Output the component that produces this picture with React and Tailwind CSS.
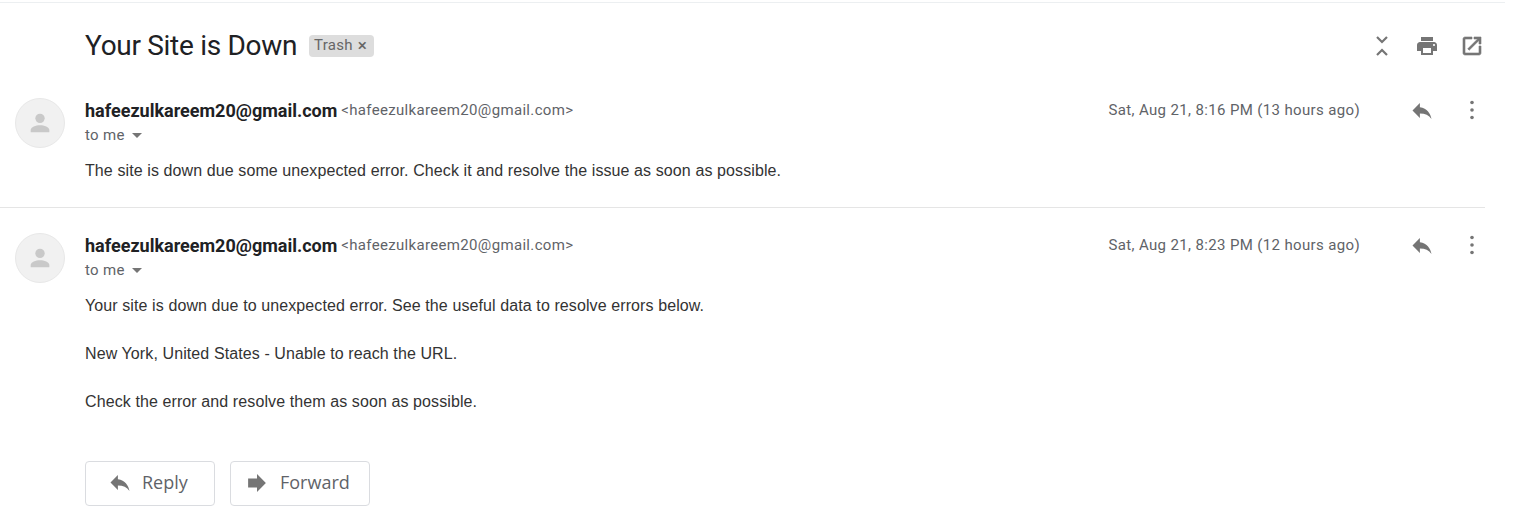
const ReplyIcon = ({ className }) => (
  <svg viewBox="2 3 20 18" className={className} fill="currentColor">
    <path d="M10 9V5l-7 7 7 7v-4.1c5 0 8.500 1.600 11 5.100-1-5-4-10-11-11z" />
  </svg>
);

const DotsIcon = () => (
  <svg viewBox="0 0 24 24" className="h-6 w-6 text-[#757575]" fill="currentColor">
    <circle cx="12" cy="4.500" r="1.800" />
    <circle cx="12" cy="12" r="1.800" />
    <circle cx="12" cy="19.500" r="1.800" />
  </svg>
);

function Message({ time, children }) {
  return (
    <div className="flex">
      <div className="mt-[-1px] ml-[15px] flex h-[50px] w-[50px] shrink-0 items-center justify-center rounded-full border border-[#e8e8e8] bg-[#f1f1f1]">
        <svg viewBox="0 0 24 24" className="h-7 w-7 text-[#c9c9c9]" fill="currentColor">
          <circle cx="12" cy="8" r="4" />
          <path d="M12 14c-3.600 0-8 1.600-8 4v2h16v-2c0-2.400-4.400-4-8-4z" />
        </svg>
      </div>
      <div className="ml-5 min-w-0 flex-1">
        <div className="mt-[-1px] flex h-6 items-center">
          <span className="text-[18px] font-bold text-[#202124]">hafeezulkareem20@gmail.com</span>
          <span className="ml-1 text-[15px] tracking-[0.33px] text-[#5f6368]">&lt;hafeezulkareem20@gmail.com&gt;</span>
          <span className="ml-auto text-[15px] tracking-[0.36px] text-[#5f6368]">{time}</span>
          <span className="mr-[1px] ml-[51px] flex w-[73px] items-center justify-between">
            <ReplyIcon className="h-[19px] w-[22px] text-[#757575]" />
            <DotsIcon />
          </span>
        </div>
        <div className="mt-[4px] flex h-[18px] items-center text-[15px] tracking-[0.3px] text-[#5f6368]">
          to me
          <span className="mt-[1px] ml-[7px] h-0 w-0 border-x-[5px] border-t-[5px] border-x-transparent border-t-[#757575]" />
        </div>
        <div className="mt-[18px] font-['Liberation_Sans',sans-serif] text-[16px] leading-[18px] tracking-[0.1px] text-[#333333]">{children}</div>
      </div>
    </div>
  );
}

function ActionButton({ label, icon, className }) {
  return (
    <button className={`flex h-[45px] items-center rounded border border-[#dadce0] bg-white pb-[2px] font-['Open_Sans',sans-serif] text-[18px] font-medium text-[#5f6368] ${className}`}>
      {icon}
      {label}
    </button>
  );
}

export default function App() {
  return (
    <div className="h-[522px] w-[1525px] overflow-hidden bg-white font-['Roboto',sans-serif]">
      <div className="mt-[2px] h-px w-[1505px] bg-[#eceff1]" />

      <div className="flex h-[85px] w-[1485px] items-center pl-[85px]">
        <h1 className="w-[212px] text-[28px] tracking-[-0.3px] whitespace-nowrap text-[#202124]">Your Site is Down</h1>
        <span className="ml-3 flex h-[22px] w-[65px] items-center rounded bg-[#dddddd] pl-[5px] text-[15px] tracking-[0.3px] text-[#666666]">
          Trash
          <span className="ml-[5px] text-[17px] leading-none font-medium">×</span>
        </span>
        <div className="mr-[1px] ml-auto flex items-center gap-[21px] text-[#757575]">
          <svg viewBox="0 0 24 24" className="h-6 w-6" fill="none" stroke="currentColor" strokeWidth="2.200">
            <path d="M7 3l5 5 5-5M7 21l5-5 5 5" />
          </svg>
          <svg viewBox="0 0 24 24" className="h-6 w-6" fill="currentColor">
            <path d="M19 8H5c-1.660 0-3 1.340-3 3v6h4v4h12v-4h4v-6c0-1.660-1.340-3-3-3zm-3 11H8v-5h8v5zm3-7c-.55 0-1-.45-1-1s.45-1 1-1 1 .45 1 1-.45 1-1 1zm-1-9H6v4h12V3z" />
          </svg>
          <svg viewBox="0 0 24 24" className="h-6 w-6" fill="currentColor" stroke="currentColor" strokeWidth="0.600">
            <path d="M19 19H5V5h7V3H5c-1.110 0-2 .9-2 2v14c0 1.100.89 2 2 2h14c1.100 0 2-.9 2-2v-7h-2v7zM14 3v2h3.590l-9.830 9.830 1.410 1.410L19 6.410V10h2V3h-7z" />
          </svg>
        </div>
      </div>

      <div className="w-[1485px]">
        <div className="h-[119px] pt-[11px]">
          <Message time="Sat, Aug 21, 8:16 PM (13 hours ago)">
            <p>The site is down due some unexpected error. Check it and resolve the issue as soon as possible.</p>
          </Message>
        </div>
        <div className="h-px bg-[#e5e5e5]" />
        <div className="pt-[26px]">
          <Message time="Sat, Aug 21, 8:23 PM (12 hours ago)">
            <p>Your site is down due to unexpected error. See the useful data to resolve errors below.</p>
            <p className="mt-[30px]">New York, United States - Unable to reach the URL.</p>
            <p className="mt-[30px]">Check the error and resolve them as soon as possible.</p>
          </Message>
        </div>
        <div className="mt-[50px] flex gap-[15px] pl-[85px]">
          <ActionButton
            label="Reply"
            className="w-[130px] pl-[23px]"
            icon={<ReplyIcon className="mr-[11px] h-[19px] w-[22px] text-[#757575]" />}
          />
          <ActionButton
            label="Forward"
            className="w-[140px] pl-[16px]"
            icon={
              <svg viewBox="3 3 18 18" className="mr-[13px] h-[20px] w-[20px] text-[#757575]" fill="currentColor">
                <path d="M12 8V4l8 8-8 8v-4H4V8z" />
              </svg>
            }
          />
        </div>
      </div>
    </div>
  );
}
